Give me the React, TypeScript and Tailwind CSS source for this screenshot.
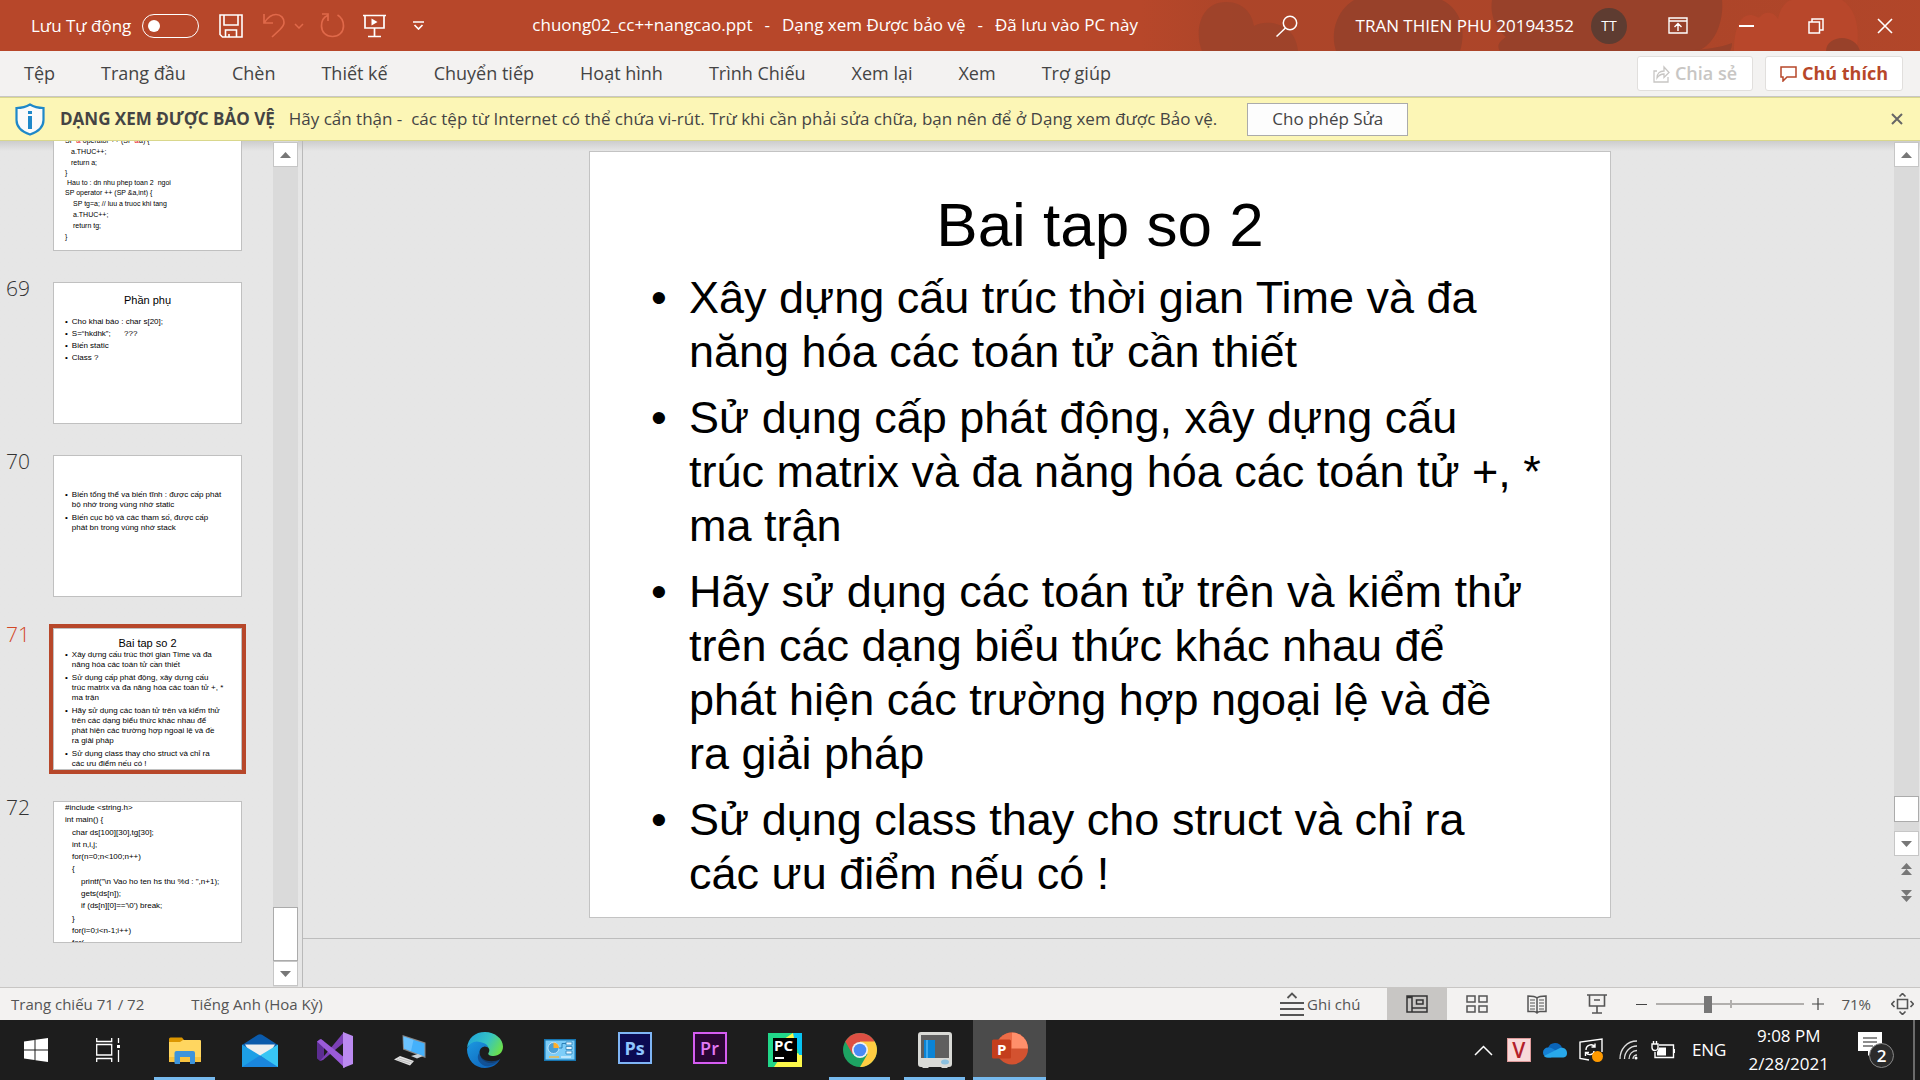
import type { ReactNode } from "react";

const TABS = [
  "Tệp", "Trang đầu", "Chèn", "Thiết kế", "Chuyển tiếp",
  "Hoạt hình", "Trình Chiếu", "Xem lại", "Xem", "Trợ giúp",
];

const BULLETS: string[][] = [
  ["Xây dựng cấu trúc thời gian Time và đa", "năng hóa các toán tử cần thiết"],
  ["Sử dụng cấp phát động, xây dựng cấu", "trúc matrix và đa năng hóa các toán tử +, *", "ma trận"],
  [
    "Hãy sử dụng các toán tử trên và kiểm thử",
    "trên các dạng biểu thức khác nhau để",
    "phát hiện các trường hợp ngoại lệ và đề",
    "ra giải pháp",
  ],
  ["Sử dụng class thay cho struct và chỉ ra", "các ưu điểm nếu có !"],
];

const STATIC_BULLETS: string[][] = [
  ["Biến tổng thể va biến tĩnh : được cấp phát", "bộ nhớ trong vùng nhớ static"],
  ["Biến cục bộ và các tham số, được cấp", "phát bn trong vùng nhớ stack"],
];

/* ---------- title bar ---------- */

function TitleArt() {
  return (
    <svg className="absolute inset-y-0 right-0 h-full w-[780px]" viewBox="0 0 780 51" preserveAspectRatio="xMaxYMid slice" aria-hidden="true">
      <defs>
        <linearGradient id="tint" x1="0" x2="1" y1="0" y2="0">
          <stop offset="0" stopColor="#a24328" stopOpacity="0" />
          <stop offset=".12" stopColor="#a24328" stopOpacity=".5" />
          <stop offset=".7" stopColor="#a24328" stopOpacity=".5" />
          <stop offset="1" stopColor="#a24328" stopOpacity=".25" />
        </linearGradient>
      </defs>
      <rect width="780" height="51" fill="url(#tint)" />
      <path d="M62 51C54 32 60 2 86 2c18 0 26 12 28 24 14-8 42-2 44 25z" fill="#9b422a" opacity=".8" />
      <path d="M196 51c-6-18 0-40 18-51h88c20 10 24 32 18 51z" fill="#98412a" />
      <path d="M352 0h230c2 20-6 44-24 51H360c-4-6 0-10 6-14-12-10-16-24-14-37z" fill="#98412a" />
      <path d="M534 51c14 0 44-2 58-8 0 4-1 6-2 8z" fill="#98412a" />
      <path d="M594 51c0-22 6-36 16-36 6 0 8 4 10 2 4-6 14-6 18 2 2-10 8-19 14-19h50c16 10 18 34 14 51z" fill="#b8472b" />
      <path d="M686 51c0-8 8-13 16-13s16 5 18 13z" fill="#98412a" />
    </svg>
  );
}

function TitleBar() {
  const btn = "flex h-full w-[69px] items-center justify-center";
  return (
    <header className="relative flex h-[51px] shrink-0 items-center bg-[#b7472a] text-white">
      <TitleArt />
      <div className="relative flex items-center pl-[31px]">
        <label className="flex items-center gap-[11px] text-[17px] whitespace-nowrap">
          Lưu Tự động
          <input
            type="checkbox"
            role="switch"
            className="h-6 w-[57px] appearance-none rounded-full border border-white before:ml-[5px] before:mt-[5px] before:block before:size-3 before:rounded-full before:bg-white"
          />
        </label>
        <button aria-label="Lưu" className="ml-5">
          <svg width="24" height="24" viewBox="0 0 24 24" fill="none" stroke="#fff" strokeWidth="1.6">
            <path d="M1 1h22v22H3.5L1 20.5zM5 1v10h14V1M6.500 23v-7h11v7M10 23v-3" />
          </svg>
        </button>
        <button aria-label="Hoàn tác" className="ml-5">
          <svg width="23" height="25" viewBox="0 0 23 25" fill="none" stroke="#e0694a" strokeWidth="1.700">
            <path d="M1 1v9h9M1.500 9.500C5 4 9 1.500 13 1.500c5 0 8 3.500 8 8 0 3-2 5-4 7L9 24" />
          </svg>
        </button>
        <button aria-label="Tùy chọn hoàn tác" className="ml-2">
          <svg width="10" height="6" viewBox="0 0 10 6" fill="none" stroke="#e0694a" strokeWidth="1.500"><path d="m1 1 4 4 4-4" /></svg>
        </button>
        <button aria-label="Làm lại" className="ml-4">
          <svg width="25" height="25" viewBox="0 0 25 25" fill="none" stroke="#e0694a" strokeWidth="1.700">
            <path d="M2 1h6v7M7.500 2.500C4 4 1.500 8 1.500 13c0 6 4.500 10.500 11 10.500S23.500 19 23.500 13c0-5-2.500-9-6-11" />
          </svg>
        </button>
        <button aria-label="Bắt đầu trình chiếu" className="ml-[18px]">
          <svg width="23" height="24" viewBox="0 0 23 24" fill="none" stroke="#fff" strokeWidth="1.700">
            <path d="M0 1.500h23M2 1.500v12.500h19V1.500M11.500 14v8M5 22.500h13" />
            <path d="M8.500 4.500v7l6-3.500z" fill="#fff" stroke="none" />
          </svg>
        </button>
        <button aria-label="Tùy chỉnh thanh công cụ" className="ml-[27px]">
          <svg width="11" height="9" viewBox="0 0 11 9" fill="none" stroke="#fff" strokeWidth="1.700"><path d="M0 1h11M1.500 4l4 4 4-4" /></svg>
        </button>
      </div>
      <h1 className="relative ml-[108px] flex gap-3 pb-[2px] text-[17px] whitespace-nowrap">
        <span>chuong02_cc++nangcao.ppt</span>
        <span>-</span>
        <span>Dạng xem Được bảo vệ</span>
        <span>-</span>
        <span>Đã lưu vào PC này</span>
      </h1>
      <div className="relative flex h-full flex-1 items-center justify-end pr-px">
        <button aria-label="Tìm kiếm" className="mr-[58px]">
          <svg width="22" height="22" viewBox="0 0 22 22" fill="none" stroke="#fff" strokeWidth="1.500"><circle cx="14" cy="8" r="6.700" /><path d="m9.500 13-9 8.500" /></svg>
        </button>
        <button className="flex items-center gap-[17px] text-[17px] whitespace-nowrap">
          TRAN THIEN PHU 20194352
          <span className="flex size-9 items-center justify-center rounded-full bg-[#5e3c31] text-sm">TT</span>
        </button>
        <button aria-label="Tùy chọn hiển thị dải băng" className={`${btn} ml-4`}>
          <svg width="20" height="17" viewBox="0 0 20 17" fill="none" stroke="#fff" strokeWidth="1.400"><path d="M1 1h18v15H1zM1 4h18M10 14V7M6.500 10 10 6.500l3.500 3.500" /></svg>
        </button>
        <button aria-label="Thu nhỏ" className={btn}><span className="h-[2px] w-[15px] bg-white" /></button>
        <button aria-label="Khôi phục" className={btn}>
          <svg width="16" height="16" viewBox="0 0 16 16" fill="none" stroke="#fff" strokeWidth="1.500"><path d="M1 4h10.500v11H1zM4 4V1h11v11h-3.500" /></svg>
        </button>
        <button aria-label="Đóng" className={btn}>
          <svg width="16" height="16" viewBox="0 0 16 16" fill="none" stroke="#fff" strokeWidth="1.600"><path d="m1 1 14 14M15 1 1 15" /></svg>
        </button>
      </div>
    </header>
  );
}

/* ---------- ribbon and message bar ---------- */

function Ribbon() {
  return (
    <nav className="flex h-[46px] shrink-0 items-center border-b border-[#c8c6c4] bg-[#f3f2f1] pl-6 text-[18px] text-[#444]">
      <div className="flex flex-1 gap-[46px] whitespace-nowrap">
        {TABS.map((t) => <button key={t}>{t}</button>)}
      </div>
      <button disabled className="flex h-[35px] w-[116px] items-center justify-center gap-[5px] rounded-[3px] border border-[#e1dfdd] bg-white font-semibold text-[#c8c6c4]">
        <svg width="17" height="18" viewBox="0 0 17 18" fill="none" stroke="currentColor" strokeWidth="1.300"><path d="M4 6H1v11h14v-5M4 13c0-5 3-7 7-7V2l5 5.500-5 5V9C8 9 6 10 4 13z" /></svg>
        Chia sẻ
      </button>
      <button className="mr-[17px] ml-3 flex h-[35px] w-[138px] items-center justify-center gap-[5px] rounded-[3px] border border-[#e1dfdd] bg-white font-bold text-[#b7472a]">
        <svg width="17" height="16" viewBox="0 0 17 16" fill="none" stroke="currentColor" strokeWidth="1.500"><path d="M1 1h15v10H7l-4 4v-4H1z" /></svg>
        Chú thích
      </button>
    </nav>
  );
}

function MessageBar() {
  return (
    <div className="flex h-11 shrink-0 items-center border-y border-[#d9d78c] bg-[#fcf6b6] text-[17px] whitespace-nowrap text-[#444]">
      <svg className="ml-[15px]" width="30" height="33" viewBox="0 0 30 33" aria-hidden="true">
        <path d="M15 1.500C11 4 6 5 1.500 5v12c0 7 6 12 13.500 14.500C22.500 29 28.500 24 28.500 17V5C24 5 19 4 15 1.500z" fill="#fafafa" stroke="#1e88c9" strokeWidth="2.200" />
        <path d="M13 8h4v3h-4zM13 13h4v13h-4z" fill="#1e88c9" />
      </svg>
      <strong className="ml-[15px] font-bold">DẠNG XEM ĐƯỢC BẢO VỆ</strong>
      <p className="ml-[14px] whitespace-pre">Hãy cẩn thận -  các tệp từ Internet có thể chứa vi-rút. Trừ khi cần phải sửa chữa, bạn nên để ở Dạng xem được Bảo vệ.</p>
      <button className="ml-[30px] h-[33px] w-[161px] border border-[#ababab] bg-[#fdfdfd]">Cho phép Sửa</button>
      <button aria-label="Đóng thông báo" className="mr-[17px] ml-auto">
        <svg width="12" height="12" viewBox="0 0 12 12" stroke="#666" strokeWidth="2"><path d="m1 1 10 10M11 1 1 11" /></svg>
      </button>
    </div>
  );
}

/* ---------- thumbnails ---------- */

function Tri({ up }: { up?: boolean }) {
  return (
    <svg width="11" height="6" viewBox="0 0 11 6" fill="#777"><path d={up ? "M0 6 5.500 0 11 6z" : "M0 0h11L5.500 6z"} /></svg>
  );
}

function Lines({ lines, className }: { lines: string[]; className?: string }) {
  return <div className={className}>{lines.map((l, i) => <p key={i}>{l}</p>)}</div>;
}

function MiniBullets({ items, className }: { items: string[][]; className: string }) {
  return (
    <ul className={`flex flex-col text-[8px] ${className}`}>
      {items.map((b) => (
        <li key={b[0]} className="flex gap-1 pl-[11px]">
          <span>•</span>
          <Lines lines={b} />
        </li>
      ))}
    </ul>
  );
}

function Thumb({ n, active, children }: { n?: string; active?: boolean; children: ReactNode }) {
  return (
    <li className="flex">
      <span className={`w-[53px] pl-[6px] text-[21px] leading-3 font-light ${active ? "text-[#d24726]" : "text-[#333]"}`}>{n}</span>
      <div className={`h-[142px] w-[189px] overflow-hidden border border-[#c0c0c0] bg-white font-['Liberation_Sans',Arial,sans-serif] whitespace-pre text-black ${active ? "outline-4 outline-[#b7472a]" : ""}`}>
        {children}
      </div>
    </li>
  );
}

function Thumbnails() {
  return (
    <aside className="flex w-[302px] shrink-0">
      <ol className="flex h-full flex-1 flex-col justify-end gap-[31px] overflow-hidden pb-11">
        <Thumb>
          <div className="flex h-full flex-col justify-end pb-2 pl-[11px] text-[7px] leading-[11px]">
            <p>SP <span className="text-red-600">&amp;</span> operator ++ (SP <span className="text-red-600">&amp;</span>a) {"{"}</p>
            <Lines className="pl-[6px]" lines={["a.THUC++;", "return a;"]} />
            <Lines className="leading-[10px]" lines={["}", " Hau to : dn nhu phep toan 2  ngoi", "SP operator ++ (SP &a,int) {"]} />
            <Lines className="pl-2" lines={["SP tg=a; // luu a truoc khi tang", "a.THUC++;", "return tg;"]} />
            <p>{"}"}</p>
          </div>
        </Thumb>
        <Thumb n="69">
          <h2 className="pt-[10px] text-center text-[11px] leading-[14px]">Phần phụ</h2>
          <MiniBullets className="mt-[9px] leading-3" items={[["Cho khai báo : char s[20];"], ["S=“hkdhk”;      ???"], ["Biến static"], ["Class ?"]]} />
        </Thumb>
        <Thumb n="70">
          <MiniBullets className="gap-[3px] pt-[34px] leading-[10px]" items={STATIC_BULLETS} />
        </Thumb>
        <Thumb n="71" active>
          <h2 className="pt-[7px] text-center text-[11px] leading-[14px]">Bai tap so 2</h2>
          <MiniBullets className="gap-[3px] leading-[10px]" items={BULLETS} />
        </Thumb>
        <Thumb n="72">
          <div className="flex flex-col gap-px pl-[11px] text-[8px] leading-3">
            <Lines lines={["#include <string.h>", "int main() {"]} />
            <Lines className="pl-[7px]" lines={["char ds[100][30],tg[30];", "int n,i,j;", "for(n=0;n<100;n++)", "{"]} />
            <Lines className="pl-4" lines={["printf(\"\\n Vao ho ten hs thu %d : \",n+1);", "gets(ds[n]);", "if (ds[n][0]=='\\0') break;"]} />
            <Lines className="pl-[7px]" lines={["}", "for(i=0;i<n-1;i++)", "for("]} />
          </div>
        </Thumb>
      </ol>
      <div className="mr-1 flex w-[25px] flex-col bg-[#dadada] py-px">
        <button aria-label="Cuộn lên" className="flex h-[25px] items-center justify-center border border-[#c6c6c6] bg-white"><Tri up /></button>
        <div className="mt-auto h-[54px] border border-[#ababab] bg-white" />
        <button aria-label="Cuộn xuống" className="flex h-[25px] items-center justify-center border border-[#c6c6c6] bg-white"><Tri /></button>
      </div>
    </aside>
  );
}

/* ---------- slide ---------- */

function Slide() {
  return (
    <article className="aspect-[4/3] w-full max-w-[1022px] border border-[#c3c3c3] bg-white pt-[37px] font-['Liberation_Sans',Arial,sans-serif] text-black">
      <h2 className="text-center text-[62px] leading-[72px]">Bai tap so 2</h2>
      <ul className="mt-[10px] flex flex-col gap-3 text-[45px] leading-[54px] whitespace-nowrap">
        {BULLETS.map((b) => (
          <li key={b[0]} className="flex pl-[61px]">
            <span className="w-[38px]">•</span>
            <Lines lines={b} />
          </li>
        ))}
      </ul>
    </article>
  );
}

function Workspace() {
  return (
    <section className="flex min-w-0 flex-1 flex-col border-l border-[#b9b9b9]">
      <div className="flex min-h-0 flex-1">
        <div className="flex flex-1 items-start justify-center pt-[10px] pl-[3px]"><Slide /></div>
        <div className="mr-px flex w-[25px] flex-col pt-px">
          <button aria-label="Cuộn lên" className="flex h-[25px] items-center justify-center border border-[#c6c6c6] bg-white"><Tri up /></button>
          <div className="flex flex-1 flex-col justify-end bg-[#dadada] pb-[9px]">
            <div className="h-[26px] border border-[#ababab] bg-white" />
          </div>
          <button aria-label="Cuộn xuống" className="flex h-[25px] items-center justify-center border border-[#c6c6c6] bg-white"><Tri /></button>
          <button aria-label="Trang chiếu trước" className="mt-[7px] flex h-3 flex-col items-center"><Tri up /><Tri up /></button>
          <button aria-label="Trang chiếu sau" className="mt-[15px] mb-9 flex h-3 flex-col items-center"><Tri /><Tri /></button>
        </div>
      </div>
      <div className="h-[49px] shrink-0 border-t border-[#bdbdbd]" />
    </section>
  );
}

/* ---------- status bar ---------- */

function StatusBar() {
  const view = "flex h-full w-[60px] items-center justify-center";
  return (
    <footer className="flex h-[33px] shrink-0 items-center border-t border-[#c8c6c4] bg-[#f3f2f1] text-[15px] whitespace-nowrap text-[#555]">
      <span className="ml-[11px]">Trang chiếu 71 / 72</span>
      <button className="ml-[47px]">Tiếng Anh (Hoa Kỳ)</button>
      <button className="mr-[27px] ml-auto flex items-center gap-[3px]">
        <svg width="24" height="24" viewBox="0 0 24 24" fill="none" stroke="#555" strokeWidth="1.800"><path d="m7.500 6 4.500-4.500L16.500 6M0 11h24M0 17h24M0 23h24" /></svg>
        Ghi chú
      </button>
      <button aria-label="Chuẩn" className={`${view} bg-[#c8c6c4]`}>
        <svg width="22" height="18" viewBox="0 0 22 18" fill="none" stroke="#333" strokeWidth="1.500"><path d="M1 1h20v16H1zM6 1v16M1 2.500h5M6 13h15M10.500 5h6.500v4h-6.500z" /></svg>
      </button>
      <button aria-label="Bộ sắp xếp trang chiếu" className={view}>
        <svg width="22" height="18" viewBox="0 0 22 18" fill="none" stroke="#555" strokeWidth="1.500"><path d="M1 1h8v6H1zM13 1h8v6h-8zM1 11h8v6H1zM13 11h8v6h-8z" /></svg>
      </button>
      <button aria-label="Dạng xem đọc" className={view}>
        <svg width="20" height="19" viewBox="0 0 20 19" fill="none" stroke="#555" strokeWidth="1.500"><path d="M10 3C8 1 4 1 1 1v15.500h6c1 0 2 .500 3 1.500 1-1 2-1.500 3-1.500h6V1c-3 0-7 0-9 2zM10 3v15" /><path d="M3 5h5M3 8h5M3 11h5M3 14h5M12 5h5M12 8h5M12 11h5M12 14h5" strokeWidth="1.200" /></svg>
      </button>
      <button aria-label="Trình chiếu" className={view}>
        <svg width="20" height="20" viewBox="0 0 20 20" fill="none" stroke="#555" strokeWidth="1.600"><path d="M0 1h20M2.500 1v11h15V1M10 12v7M5 19h10M7 6h6" /></svg>
      </button>
      <button aria-label="Thu nhỏ" className="ml-[9px] flex h-5 w-[11px] items-center"><span className="h-px w-full bg-[#444]" /></button>
      <div className="relative ml-[9px] flex h-5 w-[148px] items-center">
        <span className="absolute top-[6px] left-[74px] h-2 w-[2px] bg-[#b1afad]" />
        <input
          type="range"
          min={0}
          max={100}
          defaultValue={34}
          aria-label="Thu phóng"
          className="relative h-[2px] w-full appearance-none bg-[#b1afad] [&::-webkit-slider-thumb]:h-[17px] [&::-webkit-slider-thumb]:w-2 [&::-webkit-slider-thumb]:appearance-none [&::-webkit-slider-thumb]:bg-[#777]"
        />
      </div>
      <button aria-label="Phóng to" className="ml-2">
        <svg width="12" height="12" viewBox="0 0 12 12" stroke="#444" strokeWidth="1.200"><path d="M0 6h12M6 0v12" /></svg>
      </button>
      <button className="ml-[17px]">71%</button>
      <button aria-label="Vừa cửa sổ" className="mr-[6px] ml-5">
        <svg width="23" height="22" viewBox="0 0 23 22" fill="none" stroke="#555" strokeWidth="1.600"><path d="M6.500 6.500h10v9h-10zM8.500 3.500l3-3 3 3M8.500 18.500l3 3 3-3M3.500 8 .700 11l2.800 3M19.500 8l2.800 3-2.800 3" /></svg>
      </button>
    </footer>
  );
}

/* ---------- taskbar ---------- */

const Explorer = (
  <svg width="32" height="27" viewBox="0 0 32 27">
    <path d="M0 2a1.500 1.500 0 0 1 1.500-1.500H13l2 2.500v4H0z" fill="#dc9600" />
    <path d="M0 5h11l3-2h17a1 1 0 0 1 1 1v21H0z" fill="#ffd660" /><path d="M0 20h32v5H0z" fill="#f9c440" />
    <path d="M5.500 26V16a2 2 0 0 1 2-2H24a2 2 0 0 1 2 2v10a1 1 0 0 1-1 1h-4v-7H11v7H6.500a1 1 0 0 1-1-1z" fill="#3d94dc" />
  </svg>
);
const Mail = (
  <svg width="36" height="33" viewBox="0 0 36 33">
    <path d="M0 11 16 .800q2-1.300 4 0L36 11v9H0z" fill="#0a5aab" /><path d="M3 10.500h30L26 22H10z" fill="#eee" />
    <path d="M0 10.500v22.500h36L18 21.500z" fill="#1d9fe6" /><path d="M36 10.500V33H34L18 21.500z" fill="#38c6f4" /><path d="M0 33 18 21.500 36 33z" fill="#1a86dd" />
  </svg>
);
const VisualStudio = (
  <svg width="36" height="36" viewBox="0 0 36 36">
    <path d="M0 9.500 3 7l4 2v18l-4 2-3-2.500z" fill="#5c2d91" /><path d="M3 29 27 0v10.500L6 28z" fill="#7b40b5" />
    <path d="M0 9.500 4 7l24 19v10z" fill="#9a5bd8" /><path d="M26 0 36 4v28l-10 4z" fill="#bb8af0" />
  </svg>
);
const ThisPC = (
  <svg width="32" height="32" viewBox="0 0 32 32">
    <path d="m8.500 1 23 7.500V24L9 15.500z" fill="#888" /><path d="m9.500 2.500 21 7V22.500L10 14.500z" fill="#45b1fb" /><path d="m9.500 2.500 10 3.500L17 17l-7-2.500z" fill="#6bc3ff" />
    <path d="m17 22 7-2 5 2-6 2.500z" fill="#c9d2d8" /><path d="M0 25.500 6 22l14 5-4 4.500z" fill="#e2e2e2" /><path d="m3 25.500 13 4M5 24l13 4" stroke="#aaa" strokeWidth=".7" />
  </svg>
);
const Edge = (
  <svg width="36" height="36" viewBox="0 0 36 36">
    <defs>
      <linearGradient id="eg" x1="0" x2="1" y1=".2" y2=".6"><stop offset="0" stopColor="#1fa3da" /><stop offset=".55" stopColor="#35c3c4" /><stop offset="1" stopColor="#6be04c" /></linearGradient>
      <linearGradient id="eb" x1="0" x2="1" y1="0" y2="1"><stop offset="0" stopColor="#1c98e0" /><stop offset="1" stopColor="#0c5bb5" /></linearGradient>
    </defs>
    <path d="M0 16C1 6 8 0 18 0s18 7 18 14.500c0 6-4.500 9.500-9.500 9.500-4 0-6-1.500-5-3 2-3 .500-7-4.500-7C9 10 3 11 0 16z" fill="url(#eg)" />
    <path d="M0 17C2 11 8 8 13 10c5 1 8 3 8.500 6-2-3-9-1.500-9 4.500S18 32 26 31c4-1 6-3 7-4-2 5-8 9-15 9C8 36 0 28 0 17z" fill="url(#eb)" />
    <path d="M12 21c-3 5 0 11 6 13 7 1 12-3 15.500-7-7 4-20 3-21-6z" fill="#114a8b" opacity=".8" />
  </svg>
);
const ControlPanel = (
  <svg width="32" height="22" viewBox="0 0 32 22">
    <path d="M0 0h32v22H0z" fill="#1775b0" /><path d="M1.500 1.500h29v19h-29z" fill="#7dcdf8" />
    <circle cx="9.500" cy="9" r="5.500" fill="#4a9fd6" stroke="#fff" strokeWidth=".6" /><path d="M9.500 9V3.500A5.500 5.500 0 0 1 15 9z" fill="#ffae2b" />
    <path d="M22 3h6v3h-6zM22 7.500h6v3h-6zM22 12h6v3h-6z" fill="#e8f6ff" stroke="#2a80b9" strokeWidth=".8" /><path d="M15 9h3V4.500h4" fill="none" stroke="#2a80b9" />
    <path d="M5 18h10" stroke="#f0b94a" strokeWidth="1.500" /><path d="M17 18h10" stroke="#fff" strokeWidth="1" />
  </svg>
);
const Ps = <span className="mb-1 flex h-8 w-[34px] items-center justify-center border-2 border-[#7fb5f5] bg-[#0b0a52] text-[18px] font-bold text-[#8fc6ff]">Ps</span>;
const Pr = <span className="mb-1 flex h-8 w-[34px] items-center justify-center border-2 border-[#d65df2] bg-[#2a0634] text-[18px] font-semibold text-[#e07af5]">Pr</span>;
const PyCharm = (
  <svg width="34" height="34" viewBox="0 0 34 34">
    <path d="M0 0h34v34H0z" fill="#21d789" />
    <path d="M25 0h9v22l-6-8z" fill="#07c3f2" />
    <path d="M16 6 25 0l4 20 5 2v12H6l4-6z" fill="#fcf84a" />
    <path d="M29 5h5v17h-3z" fill="#07c3f2" />
    <path d="M5 5h24v24H5z" fill="#000" />
    <text x="6" y="18" fontSize="15" fontWeight="700" fill="#fff">PC</text>
    <path d="M7 24h9v2H7z" fill="#fff" />
  </svg>
);
const Chrome = (
  <svg width="34" height="34" viewBox="0 0 34 34">
    <circle cx="17" cy="17" r="17" fill="#1da362" />
    <path d="M2.300 8.500A17 17 0 0 1 31.700 8.500L17 17 9.600 21.200z" fill="#dd4f43" />
    <path d="M31.700 8.500A17 17 0 0 1 17 34l7.400-12.700L17 9.500v-1z" fill="#ffcd42" />
    <circle cx="17" cy="17" r="8" fill="#f1f1f1" /><circle cx="17" cy="17" r="6.300" fill="#4a8af4" />
  </svg>
);
const Monitor = (
  <svg width="34" height="36" viewBox="0 0 34 36">
    <path d="M3 0h28a3 3 0 0 1 3 3v29a3 3 0 0 1-3 3h-1l-1 1h-5l-1-1H11l-1 1H5l-1-1H3a3 3 0 0 1-3-3V3a3 3 0 0 1 3-3z" fill="#d9dad6" />
    <path d="M3 3h28v23H3z" fill="#5f5f5f" /><path d="M6 8h11v18H6z" fill="#0a84d6" /><path d="M8 8h2v18H8z" fill="#3fa9ee" />
    <ellipse cx="27" cy="30" rx="4" ry="2.500" fill="#8cc0de" />
  </svg>
);
const PowerPoint = (
  <svg width="36" height="33" viewBox="0 0 36 33">
    <circle cx="20" cy="16.500" r="16" fill="#d35230" /><path d="M20 .500A16 16 0 0 0 4 16.500h16z" fill="#ed6c47" /><path d="M20 .500a16 16 0 0 1 16 16H20z" fill="#ff8f6b" />
    <rect y="7.500" width="19" height="19" rx="1.500" fill="#c43e1c" />
    <text x="5" y="22.500" fontSize="15" fontWeight="700" fill="#fff">P</text>
  </svg>
);

const APPS: { name: string; icon: ReactNode; open?: boolean; active?: boolean }[] = [
  { name: "File Explorer", icon: Explorer, open: true },
  { name: "Mail", icon: Mail },
  { name: "Visual Studio", icon: VisualStudio },
  { name: "This PC", icon: ThisPC },
  { name: "Edge", icon: Edge },
  { name: "Control Panel", icon: ControlPanel },
  { name: "Photoshop", icon: Ps },
  { name: "Premiere Pro", icon: Pr },
  { name: "PyCharm", icon: PyCharm },
  { name: "Chrome", icon: Chrome, open: true },
  { name: "Monitor", icon: Monitor, open: true },
  { name: "PowerPoint", icon: PowerPoint, open: true, active: true },
];

function Taskbar() {
  return (
    <footer className="flex h-[60px] shrink-0 items-stretch bg-[#1d1d1d] text-[17px] text-white">
      <button aria-label="Start" className="flex w-[72px] items-center justify-center">
        <svg width="24" height="24" viewBox="0 0 24 24" fill="#fff"><path d="M0 3.500 10.500 2v9.500H0zM11.500 1.800 24 0v11.500H11.500zM0 12.500h10.500V22L0 20.500zM11.500 12.500H24V24l-12.500-1.800z" /></svg>
      </button>
      <button aria-label="Task view" className="mr-[3px] flex w-[72px] items-center justify-center">
        <svg width="24" height="24" viewBox="0 0 24 24" fill="none" stroke="#fff" strokeWidth="1.300"><path d="M.700 0v3.500h15V0M.700 6.500h15v10.500h-15zM.700 24v-3.500h15V24M22.500 0v5M22.500 12v12" /><path d="M21 7h3v3h-3z" fill="#fff" stroke="none" /></svg>
      </button>
      {APPS.map((a) => (
        <button key={a.name} aria-label={a.name} className="flex w-[75px] flex-col items-center">
          <span className={`flex w-[73px] flex-1 items-center justify-center ${a.active ? "bg-[#4b4b4b]" : "pt-[3px]"}`}>{a.icon}</span>
          <span className={`h-[3px] ${a.active ? "w-[73px]" : "w-[61px]"} ${a.open ? "bg-[#76b9ed]" : ""}`} />
        </button>
      ))}
      <div className="ml-auto flex items-center">
        <button aria-label="Biểu tượng ẩn">
          <svg width="19" height="11" viewBox="0 0 19 11" fill="none" stroke="#fff" strokeWidth="1.500"><path d="m1 10 8.500-8.500L18 10" /></svg>
        </button>
        <span className="ml-[14px] flex size-6 items-center justify-center border border-[#d99] bg-[#f8d9d9] text-[21px] leading-6 font-semibold text-[#b3202a]">V</span>
        <svg className="ml-3" width="24" height="16" viewBox="0 0 24 16">
          <path d="M5 6a7.500 7.500 0 0 1 14-.500l-8 7z" fill="#0a64b8" /><path d="M5 15.500A5 5 0 0 1 5 5.500c3-.300 6 1.500 9 4L8 15.500z" fill="#1580d4" />
          <path d="M10 9.500 17 6c4-1 7 1.500 7 5s-2 4.500-4.500 4.500H5c-2 0-3-.500-4-1.500z" fill="#28a8ea" />
        </svg>
        <svg className="ml-3" width="24" height="24" viewBox="0 0 24 24" fill="none" stroke="#fff" strokeWidth="1.400">
          <path d="M10 22 1 20.500V4l22-3v13M7 12c0-5 6-7 9-3M16 5.500V9h-3.500M15 13c0 4-6 5-8 1.500M6.500 18v-3.500H10" /><circle cx="18.500" cy="18.500" r="5.500" fill="#ff9a00" stroke="none" />
        </svg>
        <svg className="ml-4" width="19" height="20" viewBox="0 0 19 20" fill="none" stroke="#ddd" strokeWidth="1.300">
          <path d="M1 19C1 9 8 1 18 1M5.500 19C5.500 11.500 11 6 18 6M10 19c0-5 3.500-8.500 8-8.500M14 19c0-2.500 2-4 4-4" /><circle cx="17" cy="18" r="1.500" fill="#fff" stroke="none" />
        </svg>
        <svg className="ml-[13px]" width="24" height="18" viewBox="0 0 24 18" fill="none" stroke="#fff" strokeWidth="1.400">
          <path d="M8 4h14.500v12.500H4V11M23.500 8v4M1 3h6v3.500a3 3 0 0 1-6 0zM2.500 0v3M5.500 0v3" /><path d="M8 6.500h7v8H6V11z" fill="#fff" stroke="none" />
        </svg>
        <button className="ml-[17px]">ENG</button>
        <button className="ml-[22px] flex flex-col items-center leading-7"><span>9:08 PM</span><span>2/28/2021</span></button>
        <button aria-label="Thông báo" className="relative mr-[19px] ml-[29px] flex h-9 w-9 items-start">
          <svg width="24" height="24" viewBox="0 0 24 24"><path d="M0 0h24v19h-9l-5 5v-5H0z" fill="#fff" /><path d="M5 6h14M5 10h14M5 14h10" stroke="#1d1d1d" strokeWidth="1.200" /></svg>
          <span className="absolute right-0 bottom-0 flex size-[25px] items-center justify-center rounded-full border border-[#888] bg-[#2b2b2b] text-[17px] font-semibold">2</span>
        </button>
        <div className="mr-[5px] h-full w-[2px] bg-[#6b6b6b]" />
      </div>
    </footer>
  );
}

export default function App() {
  return (
    <div className="flex h-screen flex-col overflow-hidden font-['Open_Sans','Noto_Sans',sans-serif]">
      <TitleBar />
      <Ribbon />
      <MessageBar />
      <main className="flex min-h-0 flex-1 bg-[#e6e6e6] bg-linear-to-b from-[#cdcdcd] to-[#e6e6e6] to-[10px]">
        <Thumbnails />
        <Workspace />
      </main>
      <StatusBar />
      <Taskbar />
    </div>
  );
}
